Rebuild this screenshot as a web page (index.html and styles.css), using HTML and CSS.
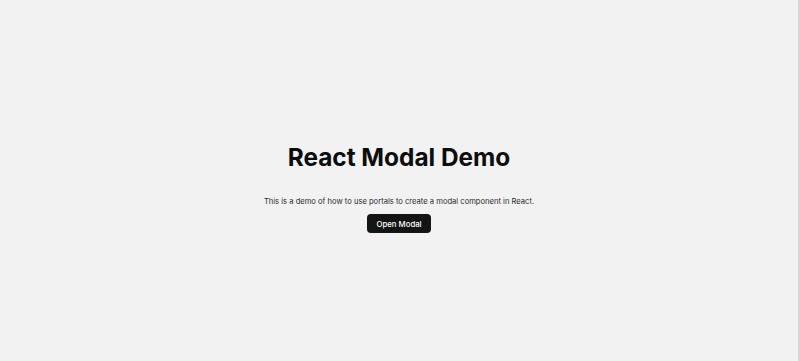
FILE: index.html
```html
<!DOCTYPE html>
<html>
<head>
<meta charset="utf-8">
<link rel="stylesheet" href="styles.css">
</head>
<body>
<main class="page">
  <h1 class="title">React Modal Demo</h1>
  <p class="lead">This is a demo of how to use portals to create a modal component in React.</p>
  <button class="btn">Open Modal</button>
</main>
</body>
</html>
```

FILE: styles.css
```css
html, body {
  margin: 0;
  padding: 0;
  height: 100%;
}
body {
  background: #f2f2f2;
  font-family: Inter, "Noto Sans", sans-serif;
  color: #111;
  box-sizing: border-box;
  border-right: 2px solid #d6d6d6;
}
.page {
  height: 100%;
  box-sizing: border-box;
  padding-top: 14px;
  display: flex;
  flex-direction: column;
  align-items: center;
  justify-content: center;
}
.title {
  margin: 0;
  font-size: 24.4px;
  font-weight: 700;
  line-height: 30px;
  color: #0d0d0d;
}
.lead {
  margin: 25px 0 0;
  font-size: 7.6px;
  line-height: 10px;
  color: #2a2a2a;
}
.btn {
  margin-top: 7px;
  background: #141414;
  color: #fff;
  border: none;
  border-radius: 4px;
  font-family: Inter, sans-serif;
  font-size: 7.8px;
  font-weight: 500;
  padding: 0 9px;
  height: 19px;
}
```
